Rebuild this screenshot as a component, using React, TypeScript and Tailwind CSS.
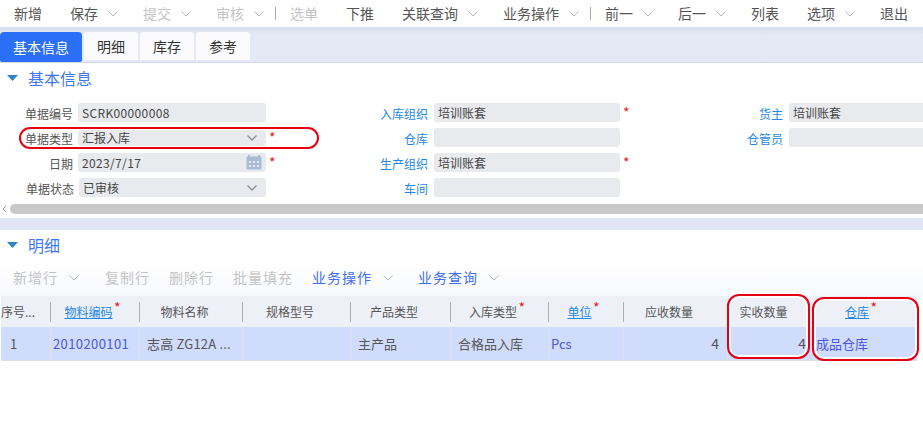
import React from "react";

const font = { fontFamily: '"Noto Sans CJK SC", sans-serif' };

function Chev({ className = "" }: { className?: string }) {
  return (
    <svg width="10" height="6" viewBox="0 0 10 6" fill="none" className={className}>
      <path d="M0.5 0.5 L5 5 L9.5 0.5" stroke="#b4b6c2" strokeWidth="1" />
    </svg>
  );
}

function Tri() {
  return (
    <svg width="11" height="6" viewBox="0 0 11 6" className="shrink-0">
      <path d="M0 0 H11 L5.5 6 Z" fill="#2e86c9" />
    </svg>
  );
}

const top: [string, string, boolean][] = [
  ["新增", "text-[#555]", false],
  ["保存", "text-[#555]", true],
  ["提交", "text-[#c4c4c4]", true],
  ["审核", "text-[#c4c4c4]", true],
];
const top2: [string, string, boolean][] = [
  ["选单", "text-[#c4c4c4]", false],
  ["下推", "text-[#555]", false],
  ["关联查询", "text-[#555]", true],
  ["业务操作", "text-[#555]", true],
];
const top3: [string, string, boolean][] = [
  ["前一", "text-[#555]", true],
  ["后一", "text-[#555]", true],
  ["列表", "text-[#555]", false],
  ["选项", "text-[#555]", true],
  ["退出", "text-[#555]", false],
];

function TopItem({ t, c, chev }: { t: string; c: string; chev: boolean }) {
  return (
    <div className="flex items-center">
      <span className={c}>{t}</span>
      {chev && <Chev className="ml-[10px] -mr-[3px]" />}
    </div>
  );
}

function Field({
  label,
  value = "",
  link = false,
  req = false,
  select = false,
  date = false,
  short = false,
  latin = false,
  labelW,
  boxW,
  gap = "ml-[5px]",
}: {
  label: string;
  value?: string;
  link?: boolean;
  req?: boolean;
  select?: boolean;
  date?: boolean;
  short?: boolean;
  latin?: boolean;
  labelW: string;
  boxW: string;
  gap?: string;
}) {
  return (
    <div className="flex h-[25px] items-start">
      <div className={`${labelW} shrink-0 pt-[1px] text-right text-[12px] leading-[19px] ${link ? "text-[#1e88e5]" : "text-[#555]"}`}>{label}</div>
      <div
        className={`${boxW} ${gap} flex shrink-0 items-center justify-between rounded-[3px] bg-[#e8eaee] pl-[4px] pr-[5px] text-[12px] text-[#444] ${
          short ? "mt-[2px] h-[16px]" : "h-[19px]"
        }`}
      >
        <span className={latin ? "tracking-[0.35px]" : ""}>{value}</span>
        {select && (
          <svg width="10" height="6" viewBox="0 0 10 6" fill="none" className="mr-[4px]">
            <path d="M0.5 0.5 L5 5 L9.5 0.5" stroke="#8d8f96" strokeWidth="1.3" />
          </svg>
        )}
        {date && (
          <svg width="16" height="15" viewBox="0 0 16 15" className="mr-[-1px]">
            <rect x="0.5" y="1.5" width="15" height="13" rx="1" fill="#a9bcd6" />
            <rect x="2" y="0" width="2" height="3" fill="#a9bcd6" />
            <rect x="12" y="0" width="2" height="3" fill="#a9bcd6" />
            <g fill="#e8eaee">
              <rect x="3" y="6" width="2" height="2" />
              <rect x="7" y="6" width="2" height="2" />
              <rect x="11" y="6" width="2" height="2" />
              <rect x="3" y="10" width="2" height="2" />
              <rect x="7" y="10" width="2" height="2" />
              <rect x="11" y="10" width="2" height="2" />
            </g>
          </svg>
        )}
      </div>
      {req && <span className="ml-[3px] pt-[2px] text-[14px] leading-[15px] text-[#f01414]">*</span>}
    </div>
  );
}

const cols: { h: string; w: string; link?: boolean; req?: boolean; sep?: boolean; pad: string }[] = [
  { h: "序号...", w: "w-[50px]", sep: true, pad: "justify-start" },
  { h: "物料编码", w: "w-[89px]", link: true, req: true, sep: true, pad: "justify-center pr-[14px]" },
  { h: "物料名称", w: "w-[103px]", sep: true, pad: "justify-center pr-[14px]" },
  { h: "规格型号", w: "w-[108px]", sep: true, pad: "justify-center pr-[14px]" },
  { h: "产品类型", w: "w-[100px]", sep: true, pad: "justify-center pr-[14px]" },
  { h: "入库类型", w: "w-[98px]", req: true, sep: true, pad: "justify-center pr-[14px]" },
  { h: "单位", w: "w-[75px]", link: true, req: true, sep: true, pad: "justify-center pr-[14px]" },
  { h: "应收数量", w: "w-[104px]", pad: "justify-center pr-[14px]" },
  { h: "实收数量", w: "w-[87px]", pad: "justify-center pr-[16px]" },
  { h: "仓库", w: "w-[102px]", link: true, req: true, sep: true, pad: "justify-center pr-[18px]" },
];

const cells: { t: string; w: string; right?: boolean }[] = [
  { t: "1", w: "w-[50px] pl-[9px]" },
  { t: "2010200101", w: "w-[89px] pl-[2px] tracking-[0.4px] text-[#4a55e0]" },
  { t: "志高 ZG12A ...", w: "w-[103px] pl-[7px] tracking-[0.2px]" },
  { t: "", w: "w-[108px]" },
  { t: "主产品", w: "w-[100px] pl-[7px]" },
  { t: "合格品入库", w: "w-[98px] pl-[7px]" },
  { t: "Pcs", w: "w-[75px] pl-[2px] text-[#4a55e0]" },
  { t: "4", w: "w-[104px] pr-[8px] text-[14px]", right: true },
  { t: "4", w: "w-[87px] pr-[8px] text-[14px]", right: true },
  { t: "成品仓库", w: "w-[102px] pl-[1px] text-[#4a55e0]" },
];

export default function App() {
  return (
    <div className="relative h-[430px] w-[923px] overflow-hidden bg-white" style={font}>
      {/* toolbar */}
      <div className="flex h-[27px] items-center bg-white pl-[14px] text-[14px]">
        <div className="flex items-center gap-[28px]">
          {top.map(([t, c, ch]) => (
            <TopItem key={t} t={t} c={c} chev={ch} />
          ))}
        </div>
        <div className="mx-[14px] h-[13px] w-px bg-[#aaa]" />
        <div className="flex items-center gap-[28px]">
          {top2.map(([t, c, ch]) => (
            <TopItem key={t} t={t} c={c} chev={ch} />
          ))}
        </div>
        <div className="mx-[14px] h-[13px] w-px bg-[#aaa]" />
        <div className="flex items-center gap-[28px]">
          {top3.map(([t, c, ch]) => (
            <TopItem key={t} t={t} c={c} chev={ch} />
          ))}
        </div>
      </div>

      {/* tabs */}
      <div className="flex h-[36px] items-end gap-[2px] border-b border-[#d5daeb] bg-gradient-to-b from-[#d9dfee] to-[#e5e9f5] to-[20%] text-[14px]">
        <div className="flex h-[30px] w-[82px] items-center justify-center rounded-t-[4px] rounded-b-[2px] bg-[#2a6ff5] text-white">基本信息</div>
        <div className="mb-[2px] flex h-[28px] w-[54px] items-center justify-center rounded-t-[3px] bg-[#fbfbfd] text-[#333]">明细</div>
        <div className="mb-[2px] flex h-[28px] w-[54px] items-center justify-center rounded-t-[3px] bg-[#fbfbfd] text-[#333]">库存</div>
        <div className="mb-[2px] flex h-[28px] w-[54px] items-center justify-center rounded-t-[3px] bg-[#fbfbfd] text-[#333]">参考</div>
      </div>

      {/* basic info */}
      <div className="h-[155px] bg-white">
        <div className="flex h-[40px] items-center gap-[10px] pb-[10px] pl-[7px]">
          <Tri />
          <span className="text-[16px] text-[#3f78f0]">基本信息</span>
        </div>
        <div className="flex">
          <div className="flex w-[285px] shrink-0 flex-col">
            <Field label="单据编号" value="SCRK00000008" latin labelW="w-[73px]" boxW="w-[188px]" />
            <Field label="单据类型" value="汇报入库" labelW="w-[73px]" boxW="w-[188px]" select req short />
            <Field label="日期" value="2023/7/17" latin labelW="w-[73px]" boxW="w-[188px]" date req />
            <Field label="单据状态" value="已审核" labelW="w-[74px]" boxW="w-[187px]" select />
          </div>
          <div className="ml-[58px] flex w-[308px] shrink-0 flex-col">
            <Field label="入库组织" value="培训账套" link req labelW="w-[85px]" boxW="w-[186px]" gap="ml-[6px]" />
            <Field label="仓库" link labelW="w-[85px]" boxW="w-[186px]" gap="ml-[6px]" />
            <Field label="生产组织" value="培训账套" link req labelW="w-[85px]" boxW="w-[186px]" gap="ml-[6px]" />
            <Field label="车间" link labelW="w-[85px]" boxW="w-[186px]" gap="ml-[6px]" />
          </div>
          <div className="ml-[54px] flex shrink-0 flex-col">
            <Field label="货主" value="培训账套" link labelW="w-[78px]" boxW="w-[186px]" gap="ml-[6px]" />
            <Field label="仓管员" link labelW="w-[78px]" boxW="w-[186px]" gap="ml-[6px]" />
          </div>
        </div>
        <div className="mt-[1px] flex h-[10px] items-center">
          <svg width="10" height="10" viewBox="0 0 10 10" fill="none" className="shrink-0">
            <path d="M6 2 L3 5 L6 8" stroke="#999" strokeWidth="1" />
          </svg>
          <div className="h-[10px] flex-1 rounded-l-[5px] bg-[#c9c9c9]" />
        </div>
      </div>

      {/* gap band */}
      <div className="h-[12px] bg-[#e0e5f4]" />

      {/* detail */}
      <div className="h-[66px] bg-gradient-to-b from-white via-white to-[#f8f9fd]">
        <div className="flex h-[31px] items-center gap-[10px] pb-[2px] pl-[7px]">
          <Tri />
          <span className="text-[16px] text-[#3f78f0]">明细</span>
        </div>
        <div className="flex h-[35px] items-center pb-[2px] pl-[13px] text-[14px] tracking-[1px]">
          <span className="text-[#c4c4c4]">新增行</span>
          <Chev className="ml-[11px]" />
          <span className="ml-[26px] text-[#c4c4c4]">复制行</span>
          <span className="ml-[19px] text-[#c4c4c4]">删除行</span>
          <span className="ml-[19px] text-[#c4c4c4]">批量填充</span>
          <span className="ml-[19px] text-[#3f6ff0]">业务操作</span>
          <Chev className="ml-[11px]" />
          <span className="ml-[25px] text-[#3f6ff0]">业务查询</span>
          <Chev className="ml-[11px]" />
        </div>
      </div>

      {/* table */}
      <div className="ml-px w-[916px] text-[13px]">
        <div className="flex h-[31px] bg-[#eef0f8] text-[12px]">
          {cols.map((c) => (
            <div key={c.h} className={`${c.w} ${c.pad} relative flex items-center pt-[1px]`}>
              <span className={`relative ${c.link ? "text-[#1e88e5] underline" : "text-[#555]"}`}>
                {c.h}
                {c.req && <span className="absolute -right-[8px] -top-[3px] text-[14px] leading-[14px] text-[#f01414] no-underline">*</span>}
              </span>
              {c.sep && <div className="absolute right-0 top-[6px] h-[20px] w-px bg-[#aeb0b6]" />}
            </div>
          ))}
        </div>
        <div className="flex h-[34px] border-b border-[#dcdee4] bg-[#d0dcfb] text-[#555]">
          {cells.map((c, i) => (
            <div key={i} className={`${c.w} flex items-center whitespace-nowrap border-r border-[#dfe1e8] ${c.right ? "justify-end" : ""}`}>
              {c.t}
            </div>
          ))}
        </div>
      </div>

      {/* annotations */}
      <div className="absolute left-[19px] top-[127px] h-[22px] w-[300px] rounded-[11px] border-2 border-[#e60012]" />
      <div className="absolute left-[727px] top-[294px] h-[65px] w-[83px] rounded-[12px] border-2 border-[#e60012] shadow-[inset_0_0_0_2px_white]" />
      <div className="absolute left-[812px] top-[297px] h-[64px] w-[107px] rounded-[12px] border-2 border-[#e60012] shadow-[inset_0_0_0_2px_white]" />
    </div>
  );
}
